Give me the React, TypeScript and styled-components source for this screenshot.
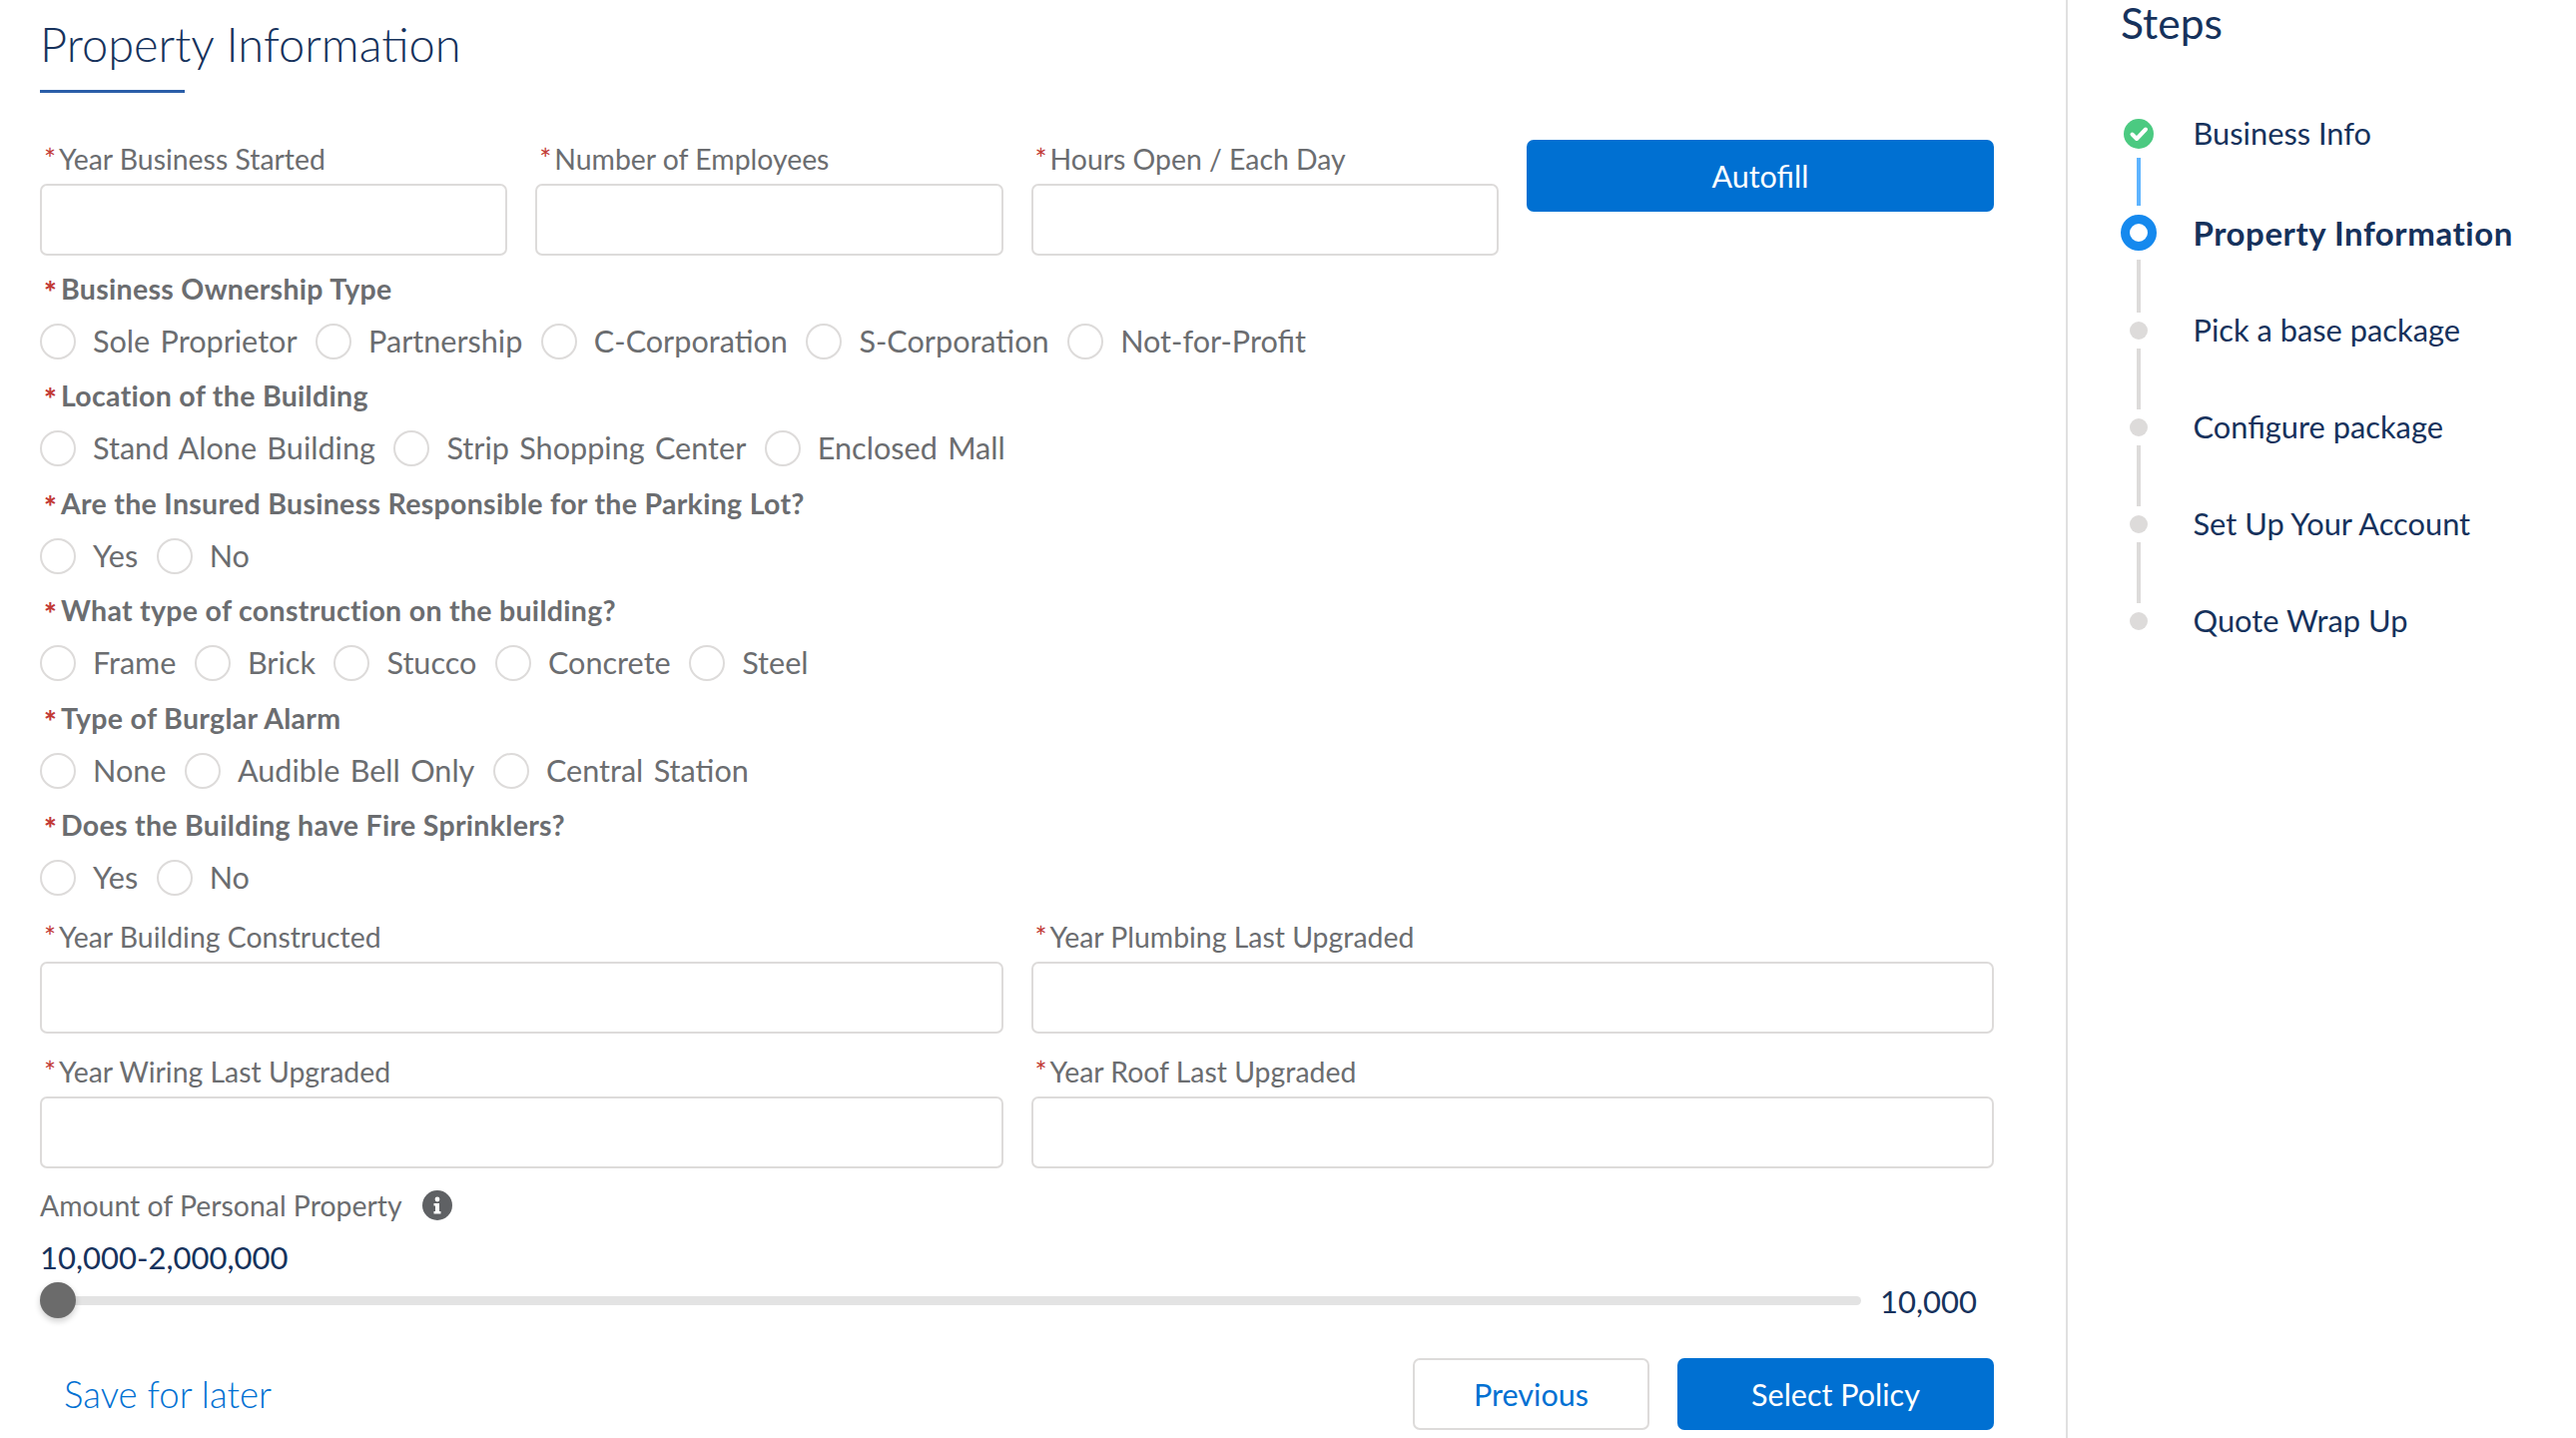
import React from "react";
import styled, { createGlobalStyle } from "styled-components";

const Global = createGlobalStyle`
  html, body { margin: 0; padding: 0; background: #fff; }
  body { font-family: "Lato", "Noto Sans", sans-serif; width: 2580px; height: 1440px; overflow: hidden; }
  * { box-sizing: border-box; }
`;

const Page = styled.div`
  display: flex;
  width: 2580px;
  height: 1440px;
  overflow: hidden;
`;
const Main = styled.main`
  width: 2071px;
  height: 1440px;
  border-right: 2px solid #e0e0e0;
  padding: 0 72px 0 40px;
  display: flex;
  flex-direction: column;
`;
const Title = styled.h1`
  margin: 0;
  height: 90px;
  line-height: 89px;
  font-size: 47px;
  font-weight: 300;
  color: #16325c;
`;
const Underline = styled.div`
  width: 145px;
  height: 3px;
  background: #2a5ea8;
`;
const FourCols = styled.div`
  display: grid;
  grid-template-columns: repeat(4, 1fr);
  column-gap: 28px;
  margin-top: 47px;
`;
const TwoCols = styled.div<{ $top: number }>`
  display: grid;
  grid-template-columns: repeat(2, 1fr);
  column-gap: 28px;
  margin-top: ${(p) => p.$top}px;
`;
const Field = styled.div`
  display: flex;
  flex-direction: column;
`;
const FieldLabel = styled.label`
  display: block;
  height: 44px;
  line-height: 38px;
  padding-left: 4px;
  font-size: 28.4px;
  color: #6b6d70;
  white-space: nowrap;
`;
const Star = styled.span`
  color: #c23934;
  margin-right: 3px;
`;
const BoldStar = styled.span`
  display: inline-block;
  position: relative;
  top: 4px;
  width: 17px;
  color: #c23934;
  font-size: 30px;
  font-weight: 900;
`;
const TextInput = styled.input`
  display: block;
  width: 100%;
  height: 72px;
  border: 2px solid #dddbda;
  border-radius: 7px;
  background: #fff;
`;
const PrimaryButton = styled.button<{ $w?: number }>`
  height: 72px;
  width: ${(p) => (p.$w ? `${p.$w}px` : "100%")};
  border: 0;
  border-radius: 7px;
  background: #0070d2;
  color: #fff;
  font: 400 30.5px "Lato", sans-serif;
`;
const OutlineButton = styled.button`
  height: 72px;
  width: 237px;
  border: 2px solid #dddbda;
  border-radius: 7px;
  background: #fff;
  color: #0070d2;
  font: 400 30.5px "Lato", sans-serif;
`;
const Groups = styled.div`
  display: flex;
  flex-direction: column;
  gap: 17.4px;
  margin-top: 14px;
`;
const Question = styled.div`
  height: 40px;
  line-height: 37px;
  padding-left: 4px;
  font-size: 28.5px;
  letter-spacing: 0.3px;
  font-weight: 700;
  color: #6b6d70;
  white-space: nowrap;
`;
const RadioRow = styled.div`
  display: flex;
  gap: 18.5px;
  margin-top: 14px;
  height: 36px;
`;
const RadioItem = styled.label`
  display: flex;
  align-items: center;
  gap: 17px;
  font-size: 30.6px;
  word-spacing: 2.5px;
  line-height: 36px;
  color: #6b6d70;
  white-space: nowrap;
`;
const RadioDot = styled.span`
  display: block;
  width: 36px;
  height: 36px;
  border: 2px solid #dddbda;
  border-radius: 50%;
  background: #fff;
`;
const AmountRow = styled.div`
  display: flex;
  align-items: center;
  height: 40px;
  margin-top: 17px;
  font-size: 28.4px;
  color: #6b6d70;
  gap: 20px;
`;
const RangeText = styled.div`
  height: 40px;
  line-height: 40px;
  margin-top: 12px;
  font-size: 31px;
  color: #16325c;
`;
const SliderRow = styled.div`
  display: flex;
  align-items: center;
  height: 36px;
  margin-top: 6px;
  gap: 19px;
`;
const Track = styled.div`
  position: relative;
  flex: 1;
  height: 9px;
  border-radius: 5px;
  background: #e3e3e3;
`;
const Thumb = styled.span`
  position: absolute;
  left: 0;
  top: -14px;
  width: 36px;
  height: 36px;
  border-radius: 50%;
  background: #6b6b6b;
  box-shadow: 0 3px 6px rgba(0, 0, 0, 0.2);
`;
const SliderValue = styled.span`
  font-size: 31px;
  color: #16325c;
  margin-right: 17px;
`;
const Footer = styled.div`
  display: flex;
  align-items: center;
  height: 72px;
  margin-top: 39px;
  gap: 28px;
`;
const SaveLink = styled.a`
  margin-right: auto;
  padding-left: 24px;
  font-size: 36.6px;
  font-weight: 300;
  color: #0070d2;
`;
const Aside = styled.aside`
  flex: 1;
  padding-left: 53px;
`;
const StepsTitle = styled.h2`
  margin: 0 0 71px;
  height: 48px;
  line-height: 46px;
  font-size: 42.5px;
  font-weight: 400;
  color: #16325c;
`;
const Step = styled.div<{ $h: number }>`
  display: flex;
  align-items: center;
  height: ${(p) => p.$h}px;
  gap: 36.5px;
`;
const MarkerCol = styled.div`
  width: 36px;
  display: flex;
  justify-content: center;
  align-items: center;
`;
const Ring = styled.span`
  display: block;
  width: 36px;
  height: 36px;
  border-radius: 50%;
  border: 9.5px solid #1589ee;
  background: #fff;
`;
const Dot = styled.span`
  display: block;
  width: 18px;
  height: 18px;
  border-radius: 50%;
  background: #dddbda;
`;
const StepLabel = styled.span<{ $active?: boolean }>`
  font-size: ${(p) => (p.$active ? 33 : 30.8)}px;
  letter-spacing: ${(p) => (p.$active ? 0.55 : 0)}px;
  font-weight: ${(p) => (p.$active ? 700 : 400)};
  line-height: ${(p) => (p.$active ? 34 : 36)}px;
  color: #16325c;
  white-space: nowrap;
`;
const Connector = styled.div<{ $h: number; $on?: boolean }>`
  width: 4px;
  height: ${(p) => p.$h}px;
  margin: 9px 0 9px 16px;
  background: ${(p) => (p.$on ? "#5eb4ff" : "#dddbda")};
`;

const InputField = ({ label }: { label: string }) => (
  <Field>
    <FieldLabel>
      <Star>*</Star>
      {label}
    </FieldLabel>
    <TextInput />
  </Field>
);

const RadioGroup = ({ q, options }: { q: string; options: string[] }) => (
  <div>
    <Question>
      <BoldStar>*</BoldStar>
      {q}
    </Question>
    <RadioRow>
      {options.map((o) => (
        <RadioItem key={o}>
          <RadioDot />
          {o}
        </RadioItem>
      ))}
    </RadioRow>
  </div>
);

const Check = () => (
  <svg width="30" height="30" viewBox="0 0 30 30">
    <circle cx="15" cy="15" r="15" fill="#4bca81" />
    <path d="M8.5 15.5l4.5 4.5 9-9.5" fill="none" stroke="#fff" strokeWidth="4" strokeLinecap="round" strokeLinejoin="round" />
  </svg>
);

const Info = () => (
  <svg width="30" height="30" viewBox="0 0 30 30">
    <circle cx="15" cy="15" r="15" fill="#5f6164" />
    <circle cx="15" cy="9" r="2.4" fill="#fff" />
    <path d="M11.5 13h5.5v8h1.5v2.5h-7V21H13v-5.5h-1.5z" fill="#fff" />
  </svg>
);

const groups = [
  { q: "Business Ownership Type", options: ["Sole Proprietor", "Partnership", "C-Corporation", "S-Corporation", "Not-for-Profit"] },
  { q: "Location of the Building", options: ["Stand Alone Building", "Strip Shopping Center", "Enclosed Mall"] },
  { q: "Are the Insured Business Responsible for the Parking Lot?", options: ["Yes", "No"] },
  { q: "What type of construction on the building?", options: ["Frame", "Brick", "Stucco", "Concrete", "Steel"] },
  { q: "Type of Burglar Alarm", options: ["None", "Audible Bell Only", "Central Station"] },
  { q: "Does the Building have Fire Sprinklers?", options: ["Yes", "No"] },
];

export default function App() {
  return (
    <Page>
      <Global />
      <Main>
        <Title>Property Information</Title>
        <Underline />
        <FourCols>
          <InputField label="Year Business Started" />
          <InputField label="Number of Employees" />
          <InputField label="Hours Open / Each Day" />
          <PrimaryButton>Autofill</PrimaryButton>
        </FourCols>
        <Groups>
          {groups.map((g) => (
            <RadioGroup key={g.q} q={g.q} options={g.options} />
          ))}
        </Groups>
        <TwoCols $top={22}>
          <InputField label="Year Building Constructed" />
          <InputField label="Year Plumbing Last Upgraded" />
        </TwoCols>
        <TwoCols $top={19}>
          <InputField label="Year Wiring Last Upgraded" />
          <InputField label="Year Roof Last Upgraded" />
        </TwoCols>
        <AmountRow>
          Amount of Personal Property
          <Info />
        </AmountRow>
        <RangeText>10,000-2,000,000</RangeText>
        <SliderRow>
          <Track>
            <Thumb />
          </Track>
          <SliderValue>10,000</SliderValue>
        </SliderRow>
        <Footer>
          <SaveLink>Save for later</SaveLink>
          <OutlineButton>Previous</OutlineButton>
          <PrimaryButton $w={317}>Select Policy</PrimaryButton>
        </Footer>
      </Main>
      <Aside>
        <StepsTitle>Steps</StepsTitle>
        <Step $h={30}>
          <MarkerCol><Check /></MarkerCol>
          <StepLabel>Business Info</StepLabel>
        </Step>
        <Connector $h={48} $on />
        <Step $h={36}>
          <MarkerCol><Ring /></MarkerCol>
          <StepLabel $active>Property Information</StepLabel>
        </Step>
        <Connector $h={53} />
        <Step $h={18}>
          <MarkerCol><Dot /></MarkerCol>
          <StepLabel>Pick a base package</StepLabel>
        </Step>
        <Connector $h={61} />
        <Step $h={18}>
          <MarkerCol><Dot /></MarkerCol>
          <StepLabel>Configure package</StepLabel>
        </Step>
        <Connector $h={61} />
        <Step $h={18}>
          <MarkerCol><Dot /></MarkerCol>
          <StepLabel>Set Up Your Account</StepLabel>
        </Step>
        <Connector $h={61} />
        <Step $h={18}>
          <MarkerCol><Dot /></MarkerCol>
          <StepLabel>Quote Wrap Up</StepLabel>
        </Step>
      </Aside>
    </Page>
  );
}
